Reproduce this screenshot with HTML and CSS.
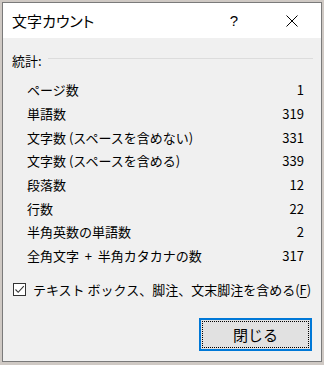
FILE: index.html
```html
<!DOCTYPE html>
<html lang="ja">
<head>
    <meta charset="UTF-8">
    <title>文字カウント</title>
    <link rel="stylesheet" href="styles.css">
</head>
<body>

<div class="dialog">
    <div class="titlebar">
        <span class="title">文字カウント</span>
        <span class="help">?</span>
        <span class="close">
            <svg width="12" height="12" viewBox="0 0 12 12"><path d="M0.5 0.5 L11.5 11.5 M11.5 0.5 L0.5 11.5" stroke="#000" stroke-width="1" fill="none"/></svg>
        </span>
    </div>

    <div class="content">
        <div class="group-head">
            <span>統計:</span>
            <div class="rule"></div>
        </div>

        <div class="stats">
            <div class="row"><span>ページ数</span><span>1</span></div>
            <div class="row"><span>単語数</span><span>319</span></div>
            <div class="row"><span>文字数 (スペースを含めない)</span><span>331</span></div>
            <div class="row"><span>文字数 (スペースを含める)</span><span>339</span></div>
            <div class="row"><span>段落数</span><span>12</span></div>
            <div class="row"><span>行数</span><span>22</span></div>
            <div class="row"><span>半角英数の単語数</span><span>2</span></div>
            <div class="row"><span>全角文字 &nbsp;+&nbsp; 半角カタカナの数</span><span>317</span></div>
        </div>

        <label class="check">
            <span class="box">
                <svg width="11" height="11" viewBox="0 0 11 11"><path d="M1.5 5.5 L4.2 8.3 L9.8 2.2" stroke="#333" stroke-width="1.1" fill="none"/></svg>
            </span>
            <span>テキスト ボックス、脚注、文末脚注を含める(<u>F</u>)</span>
        </label>

        <div class="actions">
            <button class="close-btn">閉じる</button>
        </div>
    </div>
</div>

</body>
</html>
```

FILE: styles.css
```css
body {
    margin: 0;
    padding: 0;
    background-color: #cfc9c4;
    font-family: "Noto Sans CJK JP", "Noto Sans", sans-serif;
    color: #000;
    height: 365px;
    overflow: hidden;
}

.dialog {
    margin: 2px 0 0 2px;
    width: 318px;
    height: 358px;
    border: 1px solid #7a7a7a;
    background-color: #f0f0f0;
    display: flex;
    flex-direction: column;
}

.titlebar {
    height: 35px;
    background-color: #fff;
    display: flex;
    align-items: center;
    padding-left: 9px;
}

.title {
    font-size: 15px;
    font-feature-settings: "palt";
    flex: 1;
}

.help {
    font-family: "Liberation Sans", sans-serif;
    font-size: 15px;
    width: 20px;
    text-align: center;
    margin-right: 42px;
}

.close {
    width: 12px;
    height: 12px;
    margin-right: 23px;
    display: flex;
}

.content {
    flex: 1;
    display: flex;
    flex-direction: column;
    font-size: 13px;
}

.group-head {
    display: flex;
    align-items: center;
    margin: 12px 8px 0 9px;
    height: 20px;
}

.rule {
    flex: 1;
    height: 1px;
    background-color: #dcdcdc;
    margin-left: 6px;
    margin-top: -3px;
}

.stats {
    margin: 8px 17px 0 24px;
}

.row {
    height: 23.7px;
    display: flex;
    align-items: center;
    justify-content: space-between;
}

.check {
    display: flex;
    align-items: center;
    gap: 7px;
    margin: 12px 0 0 10px;
    height: 20px;
}

.box {
    width: 13px;
    height: 13px;
    box-sizing: border-box;
    border: 1px solid #333;
    background-color: #fff;
    display: flex;
    align-items: center;
    justify-content: center;
}

.check u {
    text-decoration-thickness: 1px;
    text-underline-offset: 2px;
}

.actions {
    display: flex;
    justify-content: flex-end;
    margin: 18px 9px 0 0;
}

.close-btn {
    width: 113px;
    height: 33px;
    border: 2px solid #0078d7;
    background-color: #e1e1e1;
    font-family: inherit;
    font-size: 15px;
    color: #000;
    padding: 0;
    outline: 1px dotted #000;
    outline-offset: -4px;
}
```
